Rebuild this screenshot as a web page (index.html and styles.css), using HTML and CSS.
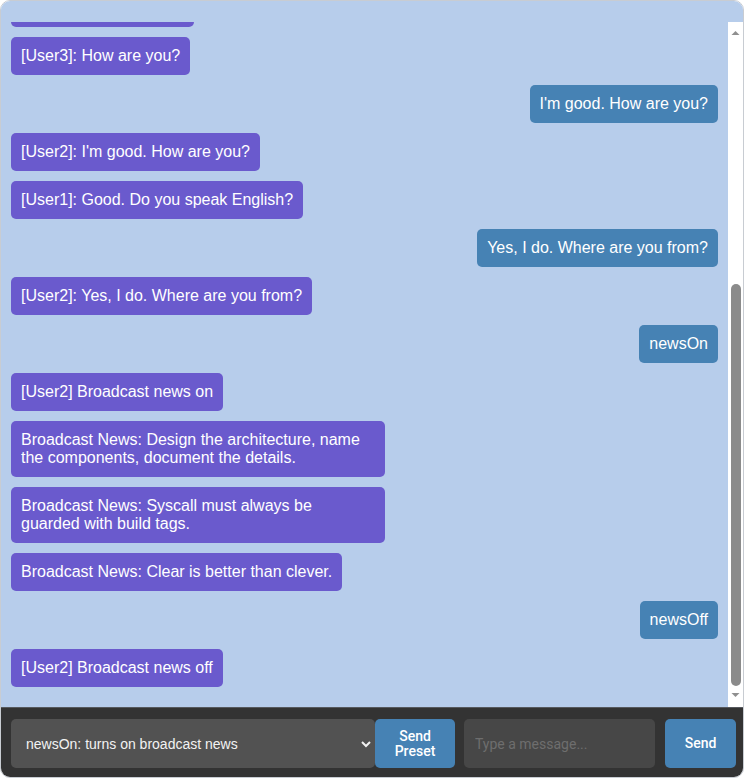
FILE: index.html
```html
<!DOCTYPE html>
<html lang="en">
<head>
<meta charset="utf-8">
<title>Chat</title>
<link rel="stylesheet" href="styles.css">
</head>
<body>
<div class="chat">
  <div class="chat-body">
    <div class="messages">
      <div class="msg msg-in">[User1]: Hi, everybody!</div>
      <div class="msg msg-in">[User3]: How are you?</div>
      <div class="msg msg-out">I'm good. How are you?</div>
      <div class="msg msg-in">[User2]: I'm good. How are you?</div>
      <div class="msg msg-in">[User1]: Good. Do you speak English?</div>
      <div class="msg msg-out">Yes, I do. Where are you from?</div>
      <div class="msg msg-in">[User2]: Yes, I do. Where are you from?</div>
      <div class="msg msg-out">newsOn</div>
      <div class="msg msg-in">[User2] Broadcast news on</div>
      <div class="msg msg-in">Broadcast News: Design the architecture, name the components, document the details.</div>
      <div class="msg msg-in">Broadcast News: Syscall must always be guarded with build tags.</div>
      <div class="msg msg-in">Broadcast News: Clear is better than clever.</div>
      <div class="msg msg-out">newsOff</div>
      <div class="msg msg-in">[User2] Broadcast news off</div>
    </div>
    <div class="scrollbar">
      <div class="sb-btn">
        <svg width="15" height="17" viewBox="0 0 15 17"><polygon points="3.5,13 11.5,13 7.5,9" fill="#8f8f8f"/></svg>
      </div>
      <div class="sb-track"><div class="sb-thumb"></div></div>
      <div class="sb-btn">
        <svg width="15" height="17" viewBox="0 0 15 17"><polygon points="3.5,3 11.5,3 7.5,7" fill="#8f8f8f"/></svg>
      </div>
    </div>
  </div>
  <div class="composer">
    <div class="preset-wrap">
      <select class="preset">
        <option>newsOn: turns on broadcast news</option>
        <option>newsOff: turns off broadcast news</option>
      </select>
      <svg class="chevron" width="12" height="8" viewBox="0 0 12 8"><polyline points="2,2 6,6 10,2" fill="none" stroke="#f2f2f2" stroke-width="2"/></svg>
    </div>
    <button class="btn btn-preset">Send<br>Preset</button>
    <input class="msg-input" type="text" placeholder="Type a message...">
    <button class="btn btn-send">Send</button>
  </div>
</div>
</body>
</html>
```
FILE: styles.css
```css
* {
  box-sizing: border-box;
}

html, body {
  margin: 0;
  padding: 0;
  background: #ffffff;
}

body {
  font-family: "Liberation Sans", Arial, sans-serif;
}

.chat {
  height: 100vh;
  display: flex;
  flex-direction: column;
  border: 1px solid #c8ccd2;
  border-radius: 10px;
  overflow: hidden;
}

.chat-body {
  flex: 1;
  min-height: 0;
  display: flex;
  background: #b7cdeb;
  padding-top: 21px;
}

.messages {
  flex: 1;
  min-width: 0;
  display: flex;
  flex-direction: column;
  justify-content: flex-end;
  overflow: hidden;
  padding: 10px;
}

.msg {
  box-sizing: content-box;
  flex: none;
  max-width: 50%;
  padding: 10px;
  margin-bottom: 10px;
  border-radius: 5px;
  color: #ffffff;
  font-size: 16px;
  line-height: 18px;
}

.msg-in {
  align-self: flex-start;
  background: #6a5acd;
}

.msg-out {
  align-self: flex-end;
  background: #4682b4;
}

.scrollbar {
  width: 15px;
  flex: none;
  background: #ffffff;
  display: flex;
  flex-direction: column;
}

.sb-btn {
  height: 17px;
  flex: none;
}

.sb-btn svg {
  display: block;
}

.sb-track {
  flex: 1;
  display: flex;
  flex-direction: column;
  justify-content: flex-end;
  align-items: center;
  padding-bottom: 4px;
}

.sb-thumb {
  width: 10px;
  height: 402px;
  border-radius: 5px;
  background: #8b8b8b;
}

.composer {
  flex: none;
  display: flex;
  background: #333333;
  border-top: 1px solid #56595e;
  padding: 11px 7px 9px 10px;
}

.preset-wrap {
  position: relative;
  width: 364px;
  height: 49px;
  flex: none;
}

.preset {
  appearance: none;
  -webkit-appearance: none;
  width: 100%;
  height: 100%;
  border: none;
  border-radius: 5px;
  background: #525252;
  color: #f2f2f2;
  font-family: "Liberation Sans", Arial, sans-serif;
  font-size: 14px;
  padding: 0 30px 0 15px;
  outline: none;
}

.chevron {
  position: absolute;
  right: 3px;
  top: 21px;
  pointer-events: none;
}

.btn {
  flex: none;
  height: 49px;
  border: none;
  border-radius: 5px;
  background: #4682b4;
  color: #ffffff;
  font-family: Roboto, "Liberation Sans", Arial, sans-serif;
  font-weight: 500;
  font-size: 14px;
  line-height: 15px;
  padding: 0;
}

.btn-preset {
  width: 80px;
}

.btn-send {
  width: 71px;
}

.msg-input {
  flex: 1;
  min-width: 0;
  height: 49px;
  margin: 0 10px 0 9px;
  border: none;
  border-radius: 5px;
  background: #474747;
  color: #eeeeee;
  font-family: Roboto, "Liberation Sans", Arial, sans-serif;
  font-size: 14px;
  padding: 0 11px;
  outline: none;
}

.msg-input::placeholder {
  color: #6e6e6e;
}
```
